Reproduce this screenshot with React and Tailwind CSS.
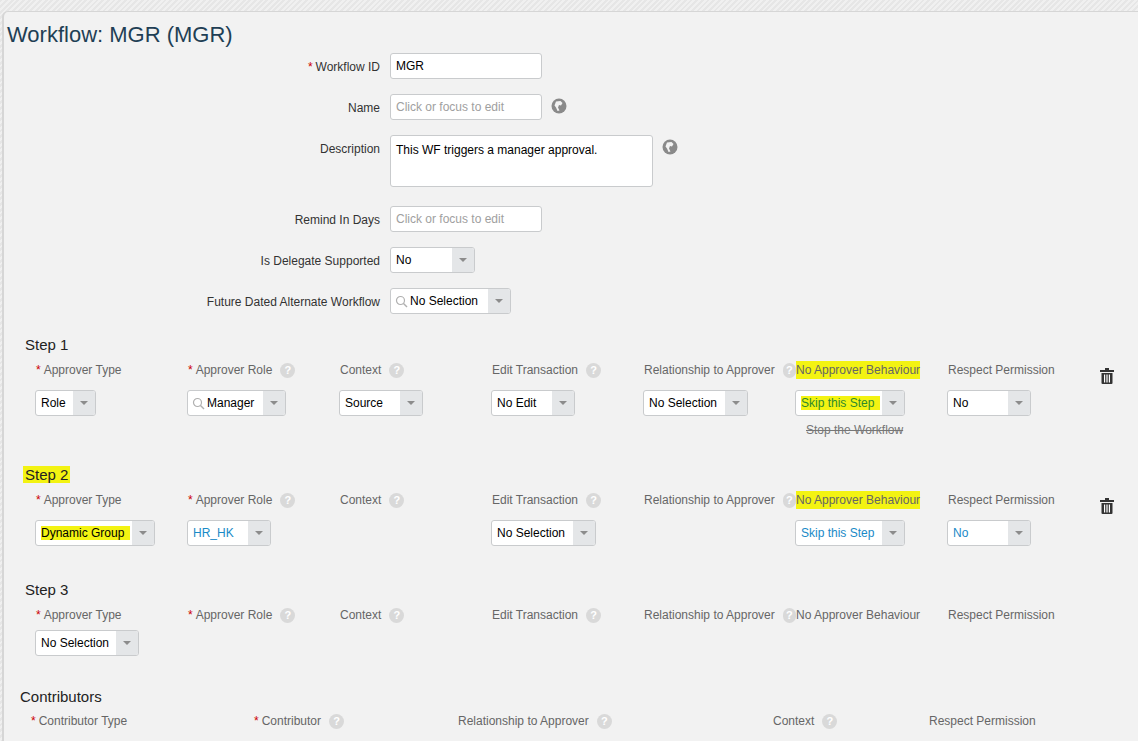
import React from 'react';

const font = { fontFamily: '"Liberation Sans", Arial, sans-serif' };

function Help() {
	return <span className="inline-flex items-center justify-center w-[15px] h-[15px] rounded-full bg-[#d9d9d9] text-white text-[11px] font-bold ml-[8px] align-middle">?</span>;
}

function Globe() {
	return <svg width="16" height="16" viewBox="0 0 16 16" className="ml-[9px] mt-[4px]">
		<circle cx="8" cy="8" r="7.5" fill="#8a8a8a" />
		<path d="M5 3.5 L9.5 3 L11.5 5 L10 7.5 L8 7 L7 9.5 L8.5 12.5 L6.5 13 L5 9.5 L3.5 7.5 Z" fill="#f2f2f2" />
	</svg>;
}

function Caret() {
	return <div className="w-[22px] self-stretch bg-[#e4e6e8] flex items-center justify-center">
		<div className="w-0 h-0 border-l-[4px] border-r-[4px] border-t-[4px] border-l-transparent border-r-transparent border-t-[#8c8c8c]" />
	</div>;
}

function Search() {
	return <svg width="13" height="13" viewBox="0 0 13 13" className="ml-[4px] mr-[2px]">
		<circle cx="5.5" cy="5.5" r="4" fill="none" stroke="#b0b0b0" strokeWidth="1.2" />
		<path d="M8.5 8.5 L12 12" stroke="#b0b0b0" strokeWidth="1.4" />
	</svg>;
}

function Select({ value, width, search, color = 'text-black', hl }) {
	return <div className="flex items-center h-[26px] bg-white border border-[#c9cbcd] rounded-[3px] overflow-hidden" style={{ width }}>
		{search && <Search />}
		<span className={`flex-1 text-[12px] ${search ? '' : 'pl-[5px]'} ${color}`}>
			{hl ? <span className="bg-[#f3f312] pr-[6px]">{value}</span> : value}
		</span>
		<Caret />
	</div>;
}

function Input({ value, placeholder, width = 152 }) {
	return <div className="h-[26px] bg-white border border-[#c9cbcd] rounded-[3px] px-[5px] flex items-center text-[12px]" style={{ width }}>
		{value ? <span className="text-black">{value}</span> : <span className="text-[#a0a0a0]">{placeholder}</span>}
	</div>;
}

function FormRow({ label, req, children, className = 'h-[26px]', mb = 'mb-[15px]' }) {
	return <div className={`flex items-start ${mb}`}>
		<div className="w-[386px] text-right text-[12px] text-[#333] pt-[5px] pr-[10px]">
			{req && <span className="text-[#c00] mr-[3px]">*</span>}{label}
		</div>
		<div className={`flex items-start ${className}`}>{children}</div>
	</div>;
}

function Label({ children, req, help, hl }) {
	return <div className="text-[12px] text-[#666] h-[18px] flex items-center whitespace-nowrap">
		{req && <span className="text-[#c00] mr-[3px]">*</span>}
		{hl ? <span className="bg-[#f3f312]">{children}</span> : children}
		{help && <Help />}
	</div>;
}

const labels = [
	{ t: 'Approver Type', req: true },
	{ t: 'Approver Role', req: true, help: true },
	{ t: 'Context', help: true },
	{ t: 'Edit Transaction', help: true },
	{ t: 'Relationship to Approver', help: true },
	{ t: 'No Approver Behaviour' },
	{ t: 'Respect Permission' },
];

function Trash() {
	return <svg width="14" height="16" viewBox="0 0 14 16">
		<rect x="0" y="2" width="14" height="2" fill="#333" />
		<rect x="5" y="0" width="4" height="2" fill="#333" />
		<path d="M1.5 5 H12.5 V15 a1 1 0 0 1 -1 1 H2.5 a1 1 0 0 1 -1 -1 Z" fill="#333" />
		<rect x="4" y="6.5" width="1.2" height="8" fill="#fff" />
		<rect x="6.4" y="6.5" width="1.2" height="8" fill="#fff" />
		<rect x="8.8" y="6.5" width="1.2" height="8" fill="#fff" />
	</svg>;
}

function Step({ title, cells, hlTitle, hlBehaviour, trash, extra, mb }) {
	return <div className={mb}>
		<div className="pl-[21px] text-[15px] text-[#222] h-[20px] mb-[7px]">
			{hlTitle ? <span className="bg-[#f3f312] px-[2px] -ml-[2px]">{title}</span> : title}
		</div>
		<div className="flex pl-[32px]">
			{labels.map((l, i) => <div key={i} className="w-[152px]">
				<Label req={l.req} help={l.help} hl={hlBehaviour && i === 5}>{l.t}</Label>
			</div>)}
			{trash && <div className="pt-[7px]"><Trash /></div>}
		</div>
		<div className="flex pl-[31px] mt-[6px] h-[26px]">
			{cells.map((c, i) => <div key={i} className="w-[152px]">{c}</div>)}
		</div>
		{extra}
	</div>;
}

export default function App() {
	return <div style={font} className="w-[1138px] h-[741px] overflow-hidden bg-[repeating-linear-gradient(135deg,#e6e6e6_0px,#e6e6e6_2px,#f0f0f0_2px,#f0f0f0_4px)] pt-[11px] pl-[2px]">
		<div className="h-full bg-[#f2f2f2] border-l-2 border-t border-[#d6d6d6] rounded-tl-[6px]">
			<h1 className="text-[22px] text-[#1f3f55] pl-[3px] pt-[6px] h-[40px]">Workflow: MGR (MGR)</h1>
			<div className="mt-[1px]">
				<FormRow label="Workflow ID" req><Input value="MGR" /></FormRow>
				<FormRow label="Name"><Input placeholder="Click or focus to edit" /><Globe /></FormRow>
				<FormRow label="Description" className="h-[52px]" mb="mb-[19px]">
					<div className="w-[263px] h-[52px] bg-white border border-[#c9cbcd] rounded-[3px] px-[5px] pt-[5px] text-[12px] text-black">This WF triggers a manager approval.</div>
					<Globe />
				</FormRow>
				<FormRow label="Remind In Days"><Input placeholder="Click or focus to edit" /></FormRow>
				<FormRow label="Is Delegate Supported"><Select value="No" width={85} /></FormRow>
				<FormRow label="Future Dated Alternate Workflow"><Select value="No Selection" width={121} search /></FormRow>
			</div>
			<div className="mt-[20px]">
				<Step title="Step 1" hlBehaviour trash mb="mb-[22px]"
					cells={[
						<Select value="Role" width={61} />,
						<Select value="Manager" width={99} search />,
						<Select value="Source" width={84} />,
						<Select value="No Edit" width={84} />,
						<Select value="No Selection" width={105} />,
						<Select value="Skip this Step" width={110} color="text-[#2d8a2d]" hl />,
						<Select value="No" width={84} />,
					]}
					extra={<div className="pl-[802px] text-[12px] text-[#777] line-through h-[26px] pt-[5px]">Stop the Workflow</div>}
				/>
				<Step title="Step 2" hlTitle hlBehaviour trash mb="mb-[33px]"
					cells={[
						<Select value="Dynamic Group" width={120} hl />,
						<Select value="HR_HK" width={84} color="text-[#1a8ac7]" />,
						<div />,
						<Select value="No Selection" width={105} />,
						<div />,
						<Select value="Skip this Step" width={110} color="text-[#1a8ac7]" />,
						<Select value="No" width={84} color="text-[#1a8ac7]" />,
					]}
				/>
				<Step title="Step 3" mb="mb-[30px]" cells={[<Select value="No Selection" width={104} />]} />
				<div>
					<div className="pl-[16px] text-[15px] text-[#222] h-[20px] mb-[6px]">Contributors</div>
					<div className="flex pl-[27px] text-[12px]">
						<div className="w-[223px]"><Label req>Contributor Type</Label></div>
						<div className="w-[204px]"><Label req help>Contributor</Label></div>
						<div className="w-[315px]"><Label help>Relationship to Approver</Label></div>
						<div className="w-[156px]"><Label help>Context</Label></div>
						<div><Label>Respect Permission</Label></div>
					</div>
				</div>
			</div>
		</div>
	</div>;
}
